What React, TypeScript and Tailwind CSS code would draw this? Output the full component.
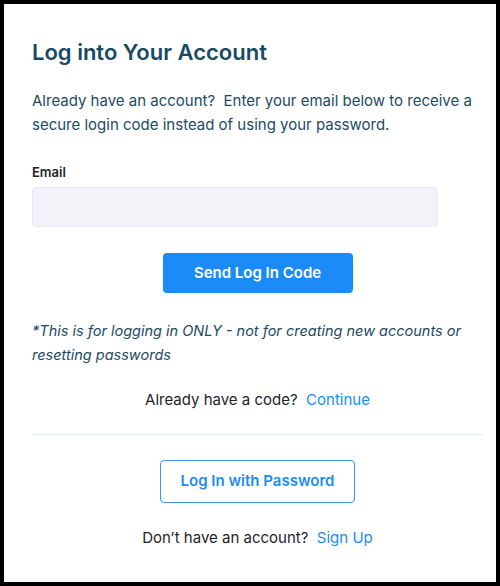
export default function App() {
  return (
    <div
      className="w-[500px] h-[586px] bg-black p-1"
      style={{ fontFamily: "Inter, 'Noto Sans', sans-serif" }}
    >
      <div className="h-full bg-white pl-7 pr-[13px] pt-[34px]">
        <h1 className="text-[22px] leading-7 font-semibold text-[#184a64]">
          Log into Your Account
        </h1>

        <p className="mt-[23px] text-[15px] leading-6 text-[#1d4a63]">
          {"Already have an account?\u00a0 Enter your email below to receive a secure login code instead of using your password."}
        </p>

        <label className="block mt-[25px] text-[13px] leading-5 font-semibold text-[#1f2329]">
          Email
        </label>
        <input
          type="email"
          className="mt-[5px] block w-[406px] h-10 rounded-[4px] border border-[#e2ebf4] bg-[#f4f2f8] outline-none"
        />

        <div className="flex justify-center mt-[26px]">
          <button className="w-[190px] h-10 rounded-[4px] bg-[#1b8cf7] text-white text-[15px] font-semibold">
            Send Log In Code
          </button>
        </div>

        <p className="mt-[26px] text-[14.5px] leading-6 italic text-[#1d4a63]">
          *This is for logging in ONLY - not for creating new accounts or resetting passwords
        </p>

        <p className="mt-[21px] text-center text-[15px] leading-6 text-[#1f2329]">
          Already have a code?{"\u00a0 "}
          <span className="text-[#1b8cf7]">Continue</span>
        </p>

        <div className="mt-[22px] h-px bg-[#e3ebf3]" />

        <div className="flex justify-center mt-[25px]">
          <button className="w-[195px] h-[43px] rounded-[4px] border border-[#3b97f2] text-[#1b8cf7] text-[15px] font-semibold">
            Log In with Password
          </button>
        </div>

        <p className="mt-[23px] text-center text-[15px] leading-6 text-[#1f2329]">
          Don’t have an account?{"\u00a0 "}
          <span className="text-[#1b8cf7]">Sign Up</span>
        </p>
      </div>
    </div>
  );
}
